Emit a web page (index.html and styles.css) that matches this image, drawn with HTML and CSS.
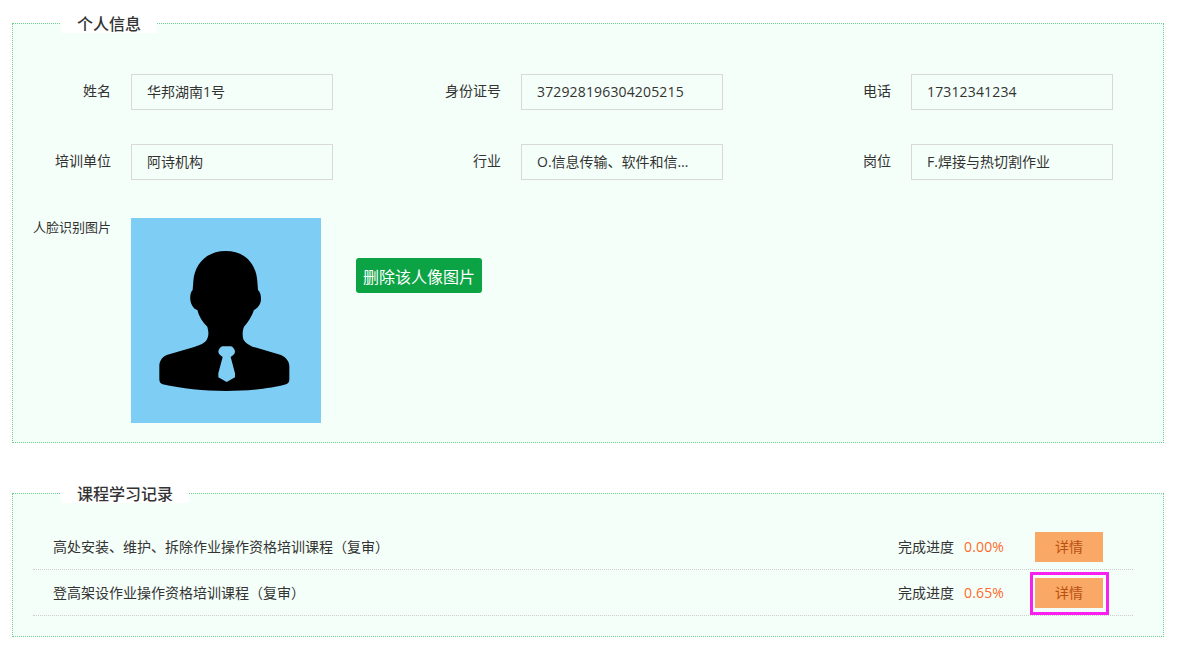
FILE: index.html
```html
<!DOCTYPE html>
<html lang="zh-CN">
<head>
  <meta charset="UTF-8">
  <title>个人信息</title>
  <link rel="stylesheet" href="styles.css">
</head>
<body>

<div class="container">
  <fieldset class="panel panel-info">
    <legend>个人信息</legend>

    <div class="fields">
      <div class="field">
        <label>姓名</label>
        <div class="value">华邦湖南1号</div>
      </div>
      <div class="field">
        <label>身份证号</label>
        <div class="value num">372928196304205215</div>
      </div>
      <div class="field">
        <label>电话</label>
        <div class="value num">17312341234</div>
      </div>
      <div class="field">
        <label>培训单位</label>
        <div class="value">阿诗机构</div>
      </div>
      <div class="field">
        <label>行业</label>
        <div class="value">O.信息传输、软件和信息技术服务业</div>
      </div>
      <div class="field">
        <label>岗位</label>
        <div class="value">F.焊接与热切割作业</div>
      </div>
    </div>

    <div class="face-row">
      <label>人脸识别图片</label>
      <svg class="face" viewBox="0 0 570 615" aria-label="人像">
        <path fill="#000" d="M284 99C225 99 190 140 187 190L185 216C178 222 177 236 178 246C180 262 190 274 199 276C204 296 214 312 229 326C233 340 234 352 228 364C222 376 205 382 192 386L107 411C92 418 85 430 85 445L85 484C85 492 88 497 95 499C150 512 220 519 284 519C350 519 420 512 465 499C472 497 475 492 475 484L475 445C475 430 465 418 450 411L365 386C352 380 340 374 336 360C334 346 335 336 339 326C352 312 362 296 369 276C380 272 390 258 390 244C390 232 388 222 381 216L379 190C375 135 340 99 284 99Z"/>
        <path fill="#7dcdf5" d="M274 385H300C306 387 312 395 312 401C312 408 304 413 299 417L312 466L312 478L287 492L262 478L262 466L275 417C270 413 262 408 262 401C262 395 268 387 274 385Z"/>
      </svg>
      <button class="del-btn">删除该人像图片</button>
    </div>
  </fieldset>

  <fieldset class="panel panel-course">
    <legend>课程学习记录</legend>

    <div class="course">
      <div class="course-name">高处安装、维护、拆除作业操作资格培训课程（复审）</div>
      <span class="progress-label">完成进度</span>
      <span class="progress-num">0.00%</span>
      <a class="detail-btn">详情</a>
    </div>
    <div class="course">
      <div class="course-name">登高架设作业操作资格培训课程（复审）</div>
      <span class="progress-label">完成进度</span>
      <span class="progress-num">0.65%</span>
      <a class="detail-btn">详情</a>
      <span class="mark"></span>
    </div>
  </fieldset>
</div>

</body>
</html>
```

FILE: styles.css
```css
* {
  box-sizing: border-box;
  margin: 0;
  padding: 0;
}

body {
  background-color: #fff;
  color: #333;
  font-family: "Open Sans", "Noto Sans CJK SC", sans-serif;
  font-size: 14px;
}

.container {
  padding: 13px 14px 0 12px;
}

.panel {
  border: 1px dotted #6fcf8f;
  background-color: #f5fff9;
  min-width: 0;
}

.panel legend {
  margin-left: 48px;
  padding: 0 16px 0 16px;
  height: 20px;
  line-height: 22px;
  font-size: 16px;
  font-weight: 500;
  color: #333;
  background-color: #fff;
}

.panel-info {
  padding: 41px 0 19px;
}

.panel-course {
  margin-top: 40px;
  padding: 21px 0 20px;
}

.fields {
  display: grid;
  grid-template-columns: repeat(3, 390px);
  row-gap: 34px;
}

.field {
  display: flex;
  align-items: flex-start;
}

label {
  width: 98px;
  margin-right: 20px;
  line-height: 34px;
  text-align: right;
  flex-shrink: 0;
}

.value {
  width: 202px;
  height: 36px;
  line-height: 34px;
  padding: 0 25px 0 15px;
  border: 1px solid #d9d9d9;
  white-space: nowrap;
  overflow: hidden;
  text-overflow: ellipsis;
}

.num {
  letter-spacing: 0.15px;
}

.face-row {
  display: flex;
  align-items: flex-start;
  margin-top: 38px;
}

.face-row label {
  font-size: 13px;
  line-height: 18px;
}

.face {
  display: block;
  width: 190px;
  height: 205px;
  background-color: #7dcdf5;
}

.del-btn {
  margin: 40px 0 0 35px;
  width: 126px;
  height: 35px;
  border: none;
  border-radius: 3px;
  background-color: #0ca345;
  color: #fff;
  font-family: inherit;
  font-size: 16px;
  cursor: pointer;
}

.course {
  position: relative;
  display: flex;
  align-items: center;
  height: 46px;
  margin: 0 30px 0 20px;
  padding: 8px 30px 7px 20px;
  border-bottom: 1px dotted #cfcfcf;
  line-height: 30px;
}

.course-name {
  flex: 1;
}

.progress-label {
  margin-right: 10px;
}

.progress-num {
  width: 71px;
  letter-spacing: 0.15px;
  color: #ff6a2a;
}

.detail-btn {
  display: block;
  width: 68px;
  height: 30px;
  background-color: #f9a866;
  color: #b9500f;
  text-align: center;
  cursor: pointer;
}

.mark {
  position: absolute;
  left: 997px;
  top: 2px;
  width: 79px;
  height: 43px;
  border: 3px solid #f81ff0;
}
```
